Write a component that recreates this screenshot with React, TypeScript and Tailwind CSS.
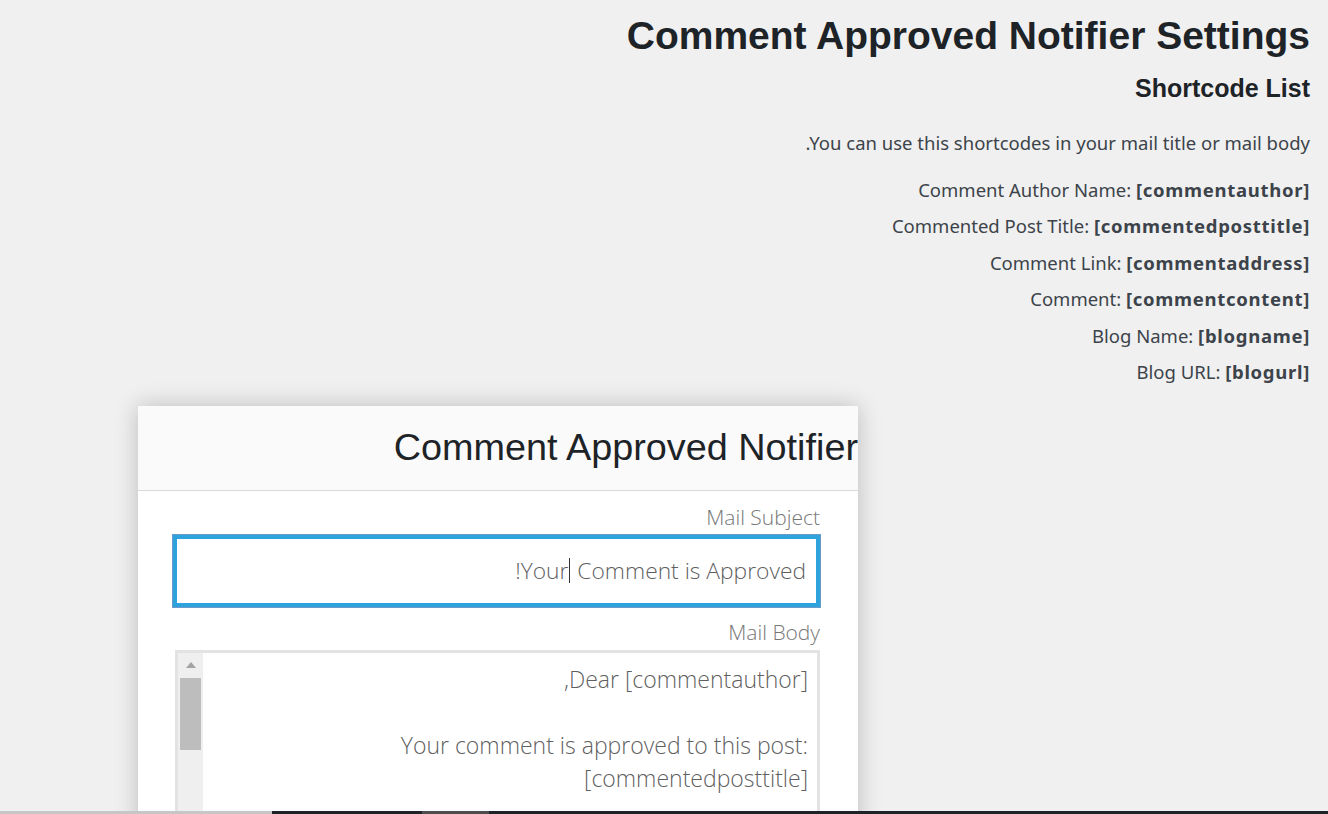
import React from 'react';

const shortcodes: { label: string; code: string }[] = [
    { label: 'Comment Author Name:', code: '[commentauthor]' },
    { label: 'Commented Post Title:', code: '[commentedposttitle]' },
    { label: 'Comment Link:', code: '[commentaddress]' },
    { label: 'Comment:', code: '[commentcontent]' },
    { label: 'Blog Name:', code: '[blogname]' },
    { label: 'Blog URL:', code: '[blogurl]' },
];

const bodyFont = "font-['Noto_Sans','DejaVu_Sans',sans-serif]";
const openSans = "font-['Open_Sans','Noto_Sans',sans-serif]";

export default function App() {
    return (
        <div className="h-[814px] w-full overflow-hidden bg-[#f0f0f0] flex flex-col">
            <div className="flex-1 overflow-hidden">
                {/* Settings header */}
                <div className="flex flex-col items-end pr-[18px] pt-[12px] text-right">
                    <h1 className="font-['Liberation_Sans',Arial,sans-serif] font-bold text-[39px] leading-[48px] text-[#1d2327]">
                        Comment Approved Notifier Settings
                    </h1>
                    <h2 className="mt-[13px] font-['Liberation_Sans',Arial,sans-serif] font-bold text-[25px] leading-[30px] text-[#1d2327]">
                        Shortcode List
                    </h2>
                    <p className={`mt-[28px] ${bodyFont} text-[18.5px] leading-[24px] text-[#3c434a]`}>
                        .You can use this shortcodes in your mail title or mail body
                    </p>
                    <div className={`mt-[23px] flex flex-col items-end gap-[12.4px] ${bodyFont} text-[18.5px] leading-[24px] text-[#3c434a]`}>
                        {shortcodes.map((s) => (
                            <div key={s.code}>
                                {s.label} <span className="font-bold tracking-[0.7px]">{s.code}</span>
                            </div>
                        ))}
                    </div>
                </div>

                {/* Popup panel */}
                <div className="mt-[22px] ml-[138px] w-[720px] bg-white shadow-[0_0_22px_rgba(0,0,0,0.22)]">
                    <div className="h-[85px] bg-[#fafafa] border-b border-[#d6dadc] flex items-center justify-end overflow-hidden whitespace-nowrap">
                        <span className="font-['Liberation_Sans',Arial,sans-serif] text-[37.8px] leading-none text-[#1d2327]">
                            Comment Approved Notifier
                        </span>
                    </div>
                    <div className={`pl-[35px] pr-[38px] pt-[13px] ${openSans} font-light`}>
                        <div className="text-right text-[21px] leading-[26px] text-[#777]">Mail Subject</div>
                        <div className="mt-[5px] h-[72px] border-[4px] border-[#2ea2dc] shadow-[0_0_0_1px_#6b9bc8] flex items-center justify-end pr-[10px] text-[22.8px] text-[#5f5f5f] whitespace-nowrap">
                            <span>!Your</span>
                            <span className="inline-block w-px h-[25px] bg-[#333] mx-[1px]"></span>
                            <span>&nbsp;Comment is Approved</span>
                        </div>
                        <div className="mt-[12px] text-right text-[21px] leading-[26px] text-[#777]">Mail Body</div>
                        <div className="mt-[5px] ml-[2px] h-[200px] border-[3px] border-[#e3e3e3] flex">
                            {/* scrollbar */}
                            <div className="w-[25px] bg-[#efefef] flex flex-col items-center pt-[9px]">
                                <div className="w-0 h-0 border-l-[5px] border-r-[5px] border-b-[6px] border-l-transparent border-r-transparent border-b-[#a3a3a3]"></div>
                                <div className="mt-[10px] w-[21px] h-[72px] bg-[#bdbdbd]"></div>
                            </div>
                            <div className="flex-1 pt-[10px] pr-[9px] text-right text-[23px] leading-[33px] text-[#5f5f5f]">
                                <div>,Dear [commentauthor]</div>
                                <div className="h-[33px]"></div>
                                <div>Your comment is approved to this post:</div>
                                <div>[commentedposttitle]</div>
                            </div>
                        </div>
                    </div>
                </div>
            </div>
            {/* bottom strip */}
            <div className="h-[3px] flex shrink-0">
                <div className="w-[272px] bg-[#c6c6c6]"></div>
                <div className="w-[150px] bg-[#1d2327]"></div>
                <div className="w-[67px] bg-[#4d4d4d]"></div>
                <div className="flex-1 bg-[#1d2327]"></div>
            </div>
        </div>
    );
}
